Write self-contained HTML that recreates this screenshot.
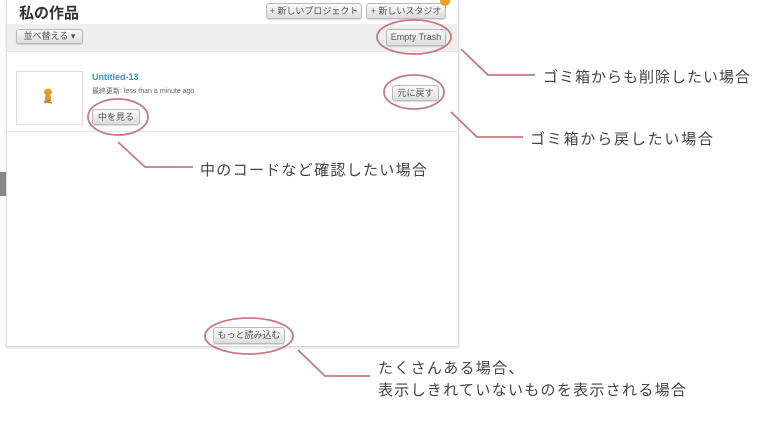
<!DOCTYPE html>
<html><head><meta charset="utf-8"><style>
body{margin:0;width:760px;height:428px;background:#fff;position:relative;overflow:hidden;font-family:"Liberation Sans","Noto Sans CJK JP",sans-serif}
.a{position:absolute}
.btn{position:absolute;border:1px solid #bbb;border-radius:3px;background:linear-gradient(#fafafa,#ddd);font-size:9px;color:#555;text-align:center;box-sizing:border-box;box-shadow:0 1px 1px rgba(0,0,0,.15)}
.t{position:absolute;font-size:15px;color:#444;letter-spacing:1px;white-space:nowrap}
</style></head><body>
<div class="a" style="left:0;top:172px;width:6px;height:24px;background:#888"></div>
<div class="a" style="left:6px;top:0;width:451px;height:346px;background:#fff;border:1px solid #ddd;border-top:none;box-shadow:0 1px 2px rgba(0,0,0,.15)"></div>
<div class="a" style="left:7px;top:24px;width:451px;height:27px;background:#efefef;border-bottom:1px solid #e2e2e2"></div>
<div class="a" style="left:19px;top:2px;font-size:15px;font-weight:bold;color:#333">私の作品</div>
<div class="btn" style="left:266px;top:3px;width:96px;height:16px;line-height:14px">+ 新しいプロジェクト</div>
<div class="btn" style="left:366px;top:3px;width:80px;height:16px;line-height:14px">+ 新しいスタジオ</div>
<div class="a" style="left:440px;top:-4px;width:10px;height:10px;border-radius:50%;background:#f0a020"></div>
<div class="btn" style="left:16px;top:29px;width:67px;height:15px;line-height:13px">並べ替える ▾</div>
<div class="btn" style="left:386px;top:29px;width:60px;height:17px;line-height:15px">Empty Trash</div>
<div class="a" style="left:16px;top:71px;width:65px;height:52px;border:1px solid #ddd"></div>
<svg class="a" style="left:42px;top:88px" width="12" height="16"><ellipse cx="6" cy="4" rx="4" ry="3.5" fill="#e0a030"/><ellipse cx="6" cy="10" rx="3" ry="4" fill="#d89a2a"/><path d="M2 13 L10 15 M3 15 L9 12" stroke="#c08020" stroke-width="1.5"/></svg>
<div class="a" style="left:92px;top:72px;font-size:9px;font-weight:bold;color:#2aa0c8">Untitled-13</div>
<div class="a" style="left:92px;top:86px;font-size:7px;color:#666">最終更新: less than a minute ago</div>
<div class="btn" style="left:92px;top:109px;width:48px;height:16px;line-height:14px">中を見る</div>
<div class="btn" style="left:392px;top:85px;width:47px;height:16px;line-height:14px">元に戻す</div>
<div class="a" style="left:7px;top:131px;width:450px;height:1px;background:#e5e5e5"></div>
<div class="btn" style="left:213px;top:327px;width:72px;height:17px;line-height:15px">もっと読み込む</div>
<svg class="a" style="left:0;top:0" width="760" height="428">
<g fill="none" stroke="#c47a80" stroke-width="1.8">
<ellipse cx="414" cy="37" rx="37" ry="17"/>
<polyline points="461,49 488,75 535,75"/>
<ellipse cx="414" cy="92" rx="30" ry="17"/>
<polyline points="451,112 477,137 523,137"/>
<ellipse cx="118" cy="117" rx="30" ry="18"/>
<polyline points="118,142 145,167 193,167"/>
<ellipse cx="249" cy="336" rx="44" ry="18"/>
<polyline points="298,350 325,376 370,376"/>
</g></svg>
<div class="t" style="left:543px;top:66px">ゴミ箱からも削除したい場合</div>
<div class="t" style="left:530px;top:128px;letter-spacing:1.8px">ゴミ箱から戻したい場合</div>
<div class="t" style="left:200px;top:159px;letter-spacing:1.3px">中のコードなど確認したい場合</div>
<div class="t" style="left:378px;top:357px;letter-spacing:1.3px">たくさんある場合、</div>
<div class="t" style="left:378px;top:379px;letter-spacing:1.3px">表示しきれていないものを表示される場合</div>
</body></html>
